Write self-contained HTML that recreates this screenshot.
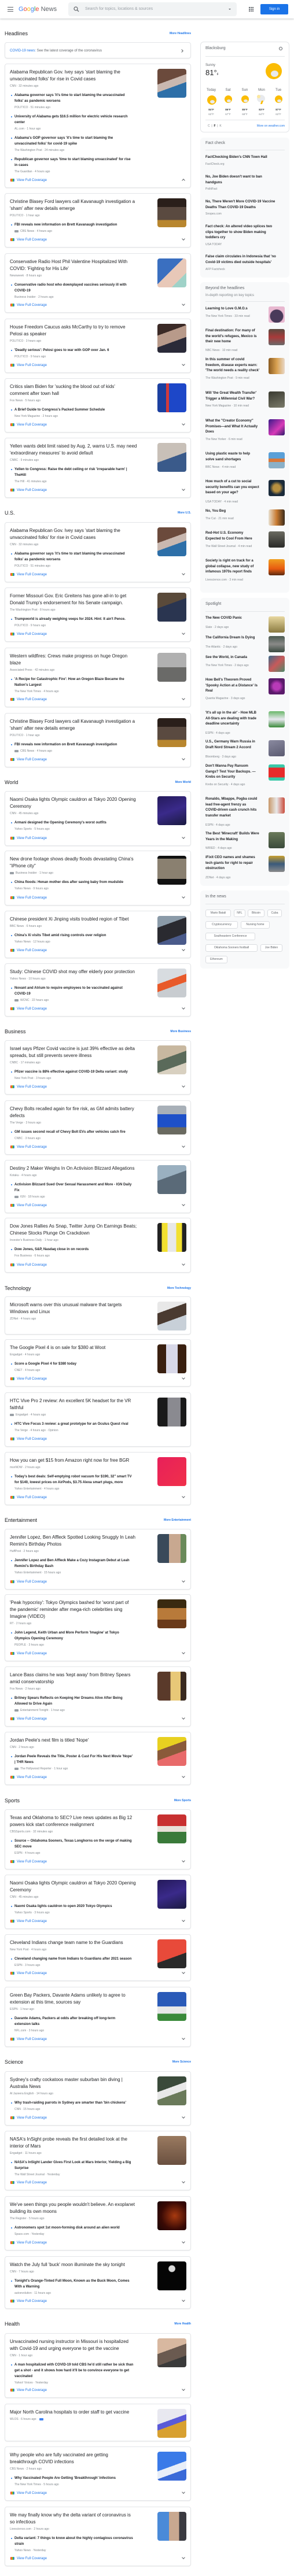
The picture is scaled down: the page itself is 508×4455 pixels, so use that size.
<!DOCTYPE html>
<html><head><meta charset="utf-8"><style>
body{margin:0;width:508px;height:4455px;position:relative;background:#fff;font-family:"Liberation Sans",Arial,sans-serif;overflow:hidden}
.a{position:absolute}
.hdr{position:absolute;left:0;top:0;width:508px;height:32px;background:#fff;box-shadow:0 1px 3px rgba(60,64,67,.3)}
.c{position:absolute;left:8px;width:322px;box-sizing:border-box;border:1px solid #e3e5e8;border-radius:4px;padding:8px 0 0 8px;overflow:hidden;background:#fff;box-shadow:0 1px 1px rgba(60,64,67,.08)}
.h{font-size:8px;line-height:12px;color:#202124;width:258px;white-space:nowrap}
.m{font-size:5px;line-height:12px;color:#80868b}
.s{font-size:6px;line-height:10px;font-weight:bold;color:#202124;margin-top:5px;padding-left:8px;position:relative;white-space:nowrap}
.s:before{content:"";position:absolute;left:2px;top:4px;width:2px;height:2px;border-radius:1px;background:#1a73e8}
.m2{font-size:5px;line-height:10px;color:#80868b;padding-left:8px;margin-top:1px}
.vid{display:inline-block;width:7px;height:4px;background:#9aa0a6;border-radius:1px;margin-right:3px;vertical-align:middle}
.v{position:absolute;left:9px;bottom:7px;font-size:6px;line-height:10px;color:#1a73e8}
.v i{display:inline-block;width:7px;height:5px;margin-right:4px;vertical-align:-1px;background:linear-gradient(90deg,#ea4335 0 25%,#fbbc04 25% 50%,#34a853 50% 75%,#4285f4 75%);border-radius:1px}
.im{position:absolute;left:263px;top:8px;width:50px;height:50px;border-radius:4px}
.ch{position:absolute;right:10px;bottom:12px;width:3px;height:3px;border-right:1px solid #5f6368;border-bottom:1px solid #5f6368;transform:rotate(45deg)}
.up{transform:rotate(-135deg);bottom:10px}
.sec{position:absolute;left:8px;font-size:9px;line-height:12px;color:#202124}
.more{position:absolute;right:178px;font-size:5px;line-height:10px;color:#1a73e8;font-weight:bold}
.r{position:absolute;left:346px;width:154px;box-sizing:border-box;background:#f8f9fa;border-radius:6px}
.rt{position:absolute;left:355px;font-size:7px;line-height:10px;color:#5f6368}
.ri{position:absolute;left:355px;font-size:6px;line-height:9.5px;font-weight:bold;color:#202124;white-space:nowrap}
.rs{position:absolute;left:355px;font-size:5px;line-height:8px;color:#80868b;white-space:nowrap}
.th{position:absolute;left:464px;width:28px;height:28px;border-radius:3px}
.dv{position:absolute;left:355px;width:137px;height:1px;background:#e3e5e8}
.chip{position:absolute;height:13px;box-sizing:border-box;border:1px solid #dadce0;border-radius:3px;background:#fff;font-size:5px;line-height:11px;color:#5f6368;text-align:center}
.sun{position:absolute;border-radius:50%;background:#fbbc04}
.cl{position:absolute;border-radius:50%;background:#e8eaed}
.dy{position:absolute;font-size:6px;line-height:8px;color:#5f6368;text-align:center;width:24px}
.tp{position:absolute;font-size:4.5px;line-height:7px;color:#3c4043;text-align:center;width:24px;font-weight:bold}
.tl{position:absolute;font-size:4.5px;line-height:7px;color:#80868b;text-align:center;width:24px}
</style></head><body>

<div class="hdr">
<div class="a" style="left:13px;top:12px;width:10px;height:1.3px;background:#5f6368"></div>
<div class="a" style="left:13px;top:15.5px;width:10px;height:1.3px;background:#5f6368"></div>
<div class="a" style="left:13px;top:19px;width:10px;height:1.3px;background:#5f6368"></div>
<div class="a" style="left:32px;top:9px;font-size:11px;line-height:14px;white-space:nowrap"><span style="color:#4285f4">G</span><span style="color:#ea4335">o</span><span style="color:#fbbc04">o</span><span style="color:#4285f4">g</span><span style="color:#34a853">l</span><span style="color:#ea4335">e</span> <span style="color:#5f6368">News</span></div>
<div class="a" style="left:118px;top:4px;width:291px;height:24px;background:#f1f3f4;border-radius:4px"></div>
<svg class="a" style="left:127px;top:11px" width="10" height="10" viewBox="0 0 10 10"><circle cx="4" cy="4" r="3" fill="none" stroke="#5f6368" stroke-width="1.2"/><line x1="6.2" y1="6.2" x2="9" y2="9" stroke="#5f6368" stroke-width="1.3"/></svg>
<div class="a" style="left:147px;top:12px;font-size:7px;line-height:8px;color:#9aa0a6">Search for topics, locations &amp; sources</div>
<div class="a" style="left:395px;top:15px;width:0;height:0;border-left:2.5px solid transparent;border-right:2.5px solid transparent;border-top:2.5px solid #5f6368"></div>
<svg class="a" style="left:430px;top:12px" width="8" height="8" viewBox="0 0 8 8" fill="#5f6368"><rect x="0" y="0" width="2" height="2"/><rect x="3" y="0" width="2" height="2"/><rect x="6" y="0" width="2" height="2"/><rect x="0" y="3" width="2" height="2"/><rect x="3" y="3" width="2" height="2"/><rect x="6" y="3" width="2" height="2"/><rect x="0" y="6" width="2" height="2"/><rect x="3" y="6" width="2" height="2"/><rect x="6" y="6" width="2" height="2"/></svg>
<div class="a" style="left:450px;top:7px;width:48px;height:18px;background:#1a73e8;border-radius:2px;color:#fff;font-size:6px;line-height:18px;text-align:center">Sign in</div>
</div>

<!-- Headlines -->
<div class="sec" style="top:52px">Headlines</div><div class="more" style="top:53px">More Headlines</div>
<div class="c" style="top:73px;height:28px;padding-top:0"><div class="a" style="left:8px;top:9px;font-size:6px;line-height:10px;color:#5f6368"><span style="color:#1a73e8">COVID-19 news:</span> See the latest coverage of the coronavirus</div><div class="a" style="right:13px;top:12px;width:3px;height:3px;border-right:1px solid #5f6368;border-bottom:1px solid #5f6368;transform:rotate(-45deg)"></div></div>

<div class="c" style="top:110px;height:215px"><i class="im" style="background:linear-gradient(160deg,#6b4a3c 0 40%,#c9b8b0 40% 60%,#2d6fa8 60%)"></i>
<div class="h">Alabama Republican Gov. Ivey says 'start blaming the<br>unvaccinated folks' for rise in Covid cases</div><div class="m">CNN · 32 minutes ago</div>
<div class="s">Alabama governor says 'it's time to start blaming the unvaccinated<br>folks' as pandemic worsens</div><div class="m2">POLITICO · 51 minutes ago</div>
<div class="s" style="margin-top:6px">University of Alabama gets $16.5 million for electric vehicle research<br>center</div><div class="m2">AL.com · 1 hour ago</div>
<div class="s" style="margin-top:6px">Alabama's GOP governor says 'it's time to start blaming the<br>unvaccinated folks' for covid-19 spike</div><div class="m2">The Washington Post · 24 minutes ago</div>
<div class="s" style="margin-top:6px">Republican governor says 'time to start blaming unvaccinated' for rise<br>in cases</div><div class="m2">The Guardian · 4 hours ago</div>
<div class="v"><i></i>View Full Coverage</div><u class="ch up"></u></div>

<div class="c" style="top:334px;height:94px"><i class="im" style="background:linear-gradient(180deg,#2a1f1a 0 30%,#5a4a40 30% 75%,#b8862e 75%)"></i>
<div class="h">Christine Blasey Ford lawyers call Kavanaugh investigation a<br>'sham' after new details emerge</div><div class="m">POLITICO · 1 hour ago</div>
<div class="s">FBI reveals new information on Brett Kavanaugh investigation</div><div class="m2"><span class="vid"></span>CBS News · 4 hours ago</div>
<div class="v"><i></i>View Full Coverage</div><u class="ch"></u></div>

<div class="c" style="top:438px;height:103px"><i class="im" style="background:linear-gradient(135deg,#3a6fc0 0 45%,#e8c8b8 45% 75%,#9fd2c8 75%)"></i>
<div class="h">Conservative Radio Host Phil Valentine Hospitalized With<br>COVID: 'Fighting for His Life'</div><div class="m">Newsweek · 8 hours ago</div>
<div class="s">Conservative radio host who downplayed vaccines seriously ill with<br>COVID-19</div><div class="m2">Business Insider · 2 hours ago</div>
<div class="v"><i></i>View Full Coverage</div><u class="ch"></u></div>

<div class="c" style="top:551px;height:94px"><i class="im" style="background:linear-gradient(160deg,#3b2a26 0 30%,#b89a8a 30% 60%,#2a2a38 60%)"></i>
<div class="h">House Freedom Caucus asks McCarthy to try to remove<br>Pelosi as speaker</div><div class="m">POLITICO · 3 hours ago</div>
<div class="s">'Deadly serious': Pelosi goes to war with GOP over Jan. 6</div><div class="m2">POLITICO · 9 hours ago</div>
<div class="v"><i></i>View Full Coverage</div><u class="ch"></u></div>

<div class="c" style="top:654px;height:94px"><i class="im" style="background:linear-gradient(90deg,#1b3fa0 0 30%,#d23a3a 30% 40%,#1d47c8 40%)"></i>
<div class="h">Critics slam Biden for 'sucking the blood out of kids'<br>comment after town hall</div><div class="m">Fox News · 5 hours ago</div>
<div class="s">A Brief Guide to Congress's Packed Summer Schedule</div><div class="m2">New York Magazine · 2 hours ago</div>
<div class="v"><i></i>View Full Coverage</div><u class="ch"></u></div>

<div class="c" style="top:757px;height:104px"><i class="im" style="background:linear-gradient(160deg,#c8c0b8 0 50%,#3a5a8a 50%)"></i>
<div class="h">Yellen wants debt limit raised by Aug. 2, warns U.S. may need<br>'extraordinary measures' to avoid default</div><div class="m">CNBC · 9 minutes ago</div>
<div class="s">Yellen to Congress: Raise the debt ceiling or risk 'irreparable harm' |<br>TheHill</div><div class="m2">The Hill · 41 minutes ago</div>
<div class="v"><i></i>View Full Coverage</div><u class="ch"></u></div>

<!-- U.S. -->
<div class="sec" style="top:881px">U.S.</div><div class="more" style="top:882px">More U.S.</div>
<div class="c" style="top:903px;height:104px"><i class="im" style="background:linear-gradient(160deg,#6b4a3c 0 40%,#c9b8b0 40% 60%,#2d6fa8 60%)"></i>
<div class="h">Alabama Republican Gov. Ivey says 'start blaming the<br>unvaccinated folks' for rise in Covid cases</div><div class="m">CNN · 32 minutes ago</div>
<div class="s">Alabama governor says 'it's time to start blaming the unvaccinated<br>folks' as pandemic worsens</div><div class="m2">POLITICO · 51 minutes ago</div>
<div class="v"><i></i>View Full Coverage</div><u class="ch"></u></div>

<div class="c" style="top:1016px;height:94px"><i class="im" style="background:linear-gradient(160deg,#5a4a3a 0 40%,#2a3550 40%)"></i>
<div class="h">Former Missouri Gov. Eric Greitens has gone all-in to get<br>Donald Trump's endorsement for his Senate campaign.</div><div class="m">The Washington Post · 8 hours ago</div>
<div class="s">Trumpworld is already weighing veeps for 2024. Hint: It ain't Pence.</div><div class="m2">POLITICO · 9 hours ago</div>
<div class="v"><i></i>View Full Coverage</div><u class="ch"></u></div>

<div class="c" style="top:1120px;height:103px"><i class="im" style="background:linear-gradient(180deg,#b0b0b0 0 50%,#6a6a68 50%)"></i>
<div class="h">Western wildfires: Crews make progress on huge Oregon<br>blaze</div><div class="m">Associated Press · 42 minutes ago</div>
<div class="s">'A Recipe for Catastrophic Fire': How an Oregon Blaze Became the<br>Nation's Largest</div><div class="m2">The New York Times · 4 hours ago</div>
<div class="v"><i></i>View Full Coverage</div><u class="ch"></u></div>

<div class="c" style="top:1233px;height:94px"><i class="im" style="background:linear-gradient(180deg,#2a1f1a 0 30%,#5a4a40 30% 75%,#b8862e 75%)"></i>
<div class="h">Christine Blasey Ford lawyers call Kavanaugh investigation a<br>'sham' after new details emerge</div><div class="m">POLITICO · 1 hour ago</div>
<div class="s">FBI reveals new information on Brett Kavanaugh investigation</div><div class="m2"><span class="vid"></span>CBS News · 4 hours ago</div>
<div class="v"><i></i>View Full Coverage</div><u class="ch"></u></div>

<!-- World -->
<div class="sec" style="top:1347px">World</div><div class="more" style="top:1348px">More World</div>
<div class="c" style="top:1368px;height:95px"><i class="im" style="background:linear-gradient(160deg,#241a5a,#3a2a8a 50%,#1a1a40)"></i>
<div class="h">Naomi Osaka lights Olympic cauldron at Tokyo 2020 Opening<br>Ceremony</div><div class="m">CNN · 45 minutes ago</div>
<div class="s">Armani designed the Opening Ceremony's worst outfits</div><div class="m2">Yahoo Sports · 5 hours ago</div>
<div class="v"><i></i>View Full Coverage</div><u class="ch"></u></div>

<div class="c" style="top:1471px;height:95px"><i class="im" style="background:linear-gradient(180deg,#111 0 10%,#8a8070 10% 80%,#111 80%)"></i>
<div class="h">New drone footage shows deadly floods devastating China's<br>"iPhone city"</div><div class="m"><span class="vid"></span>Business Insider · 1 hour ago</div>
<div class="s">China floods: Henan mother dies after saving baby from mudslide</div><div class="m2">Yahoo News · 9 hours ago</div>
<div class="v"><i></i>View Full Coverage</div><u class="ch"></u></div>

<div class="c" style="top:1575px;height:82px"><i class="im" style="background:linear-gradient(160deg,#8a9aa8 0 30%,#2a2a30 30% 70%,#4a5a8a 70%)"></i>
<div class="h">Chinese president Xi Jinping visits troubled region of Tibet</div><div class="m">BBC News · 6 hours ago</div>
<div class="s">China's Xi visits Tibet amid rising controls over religion</div><div class="m2">Yahoo News · 12 hours ago</div>
<div class="v"><i></i>View Full Coverage</div><u class="ch"></u></div>

<div class="c" style="top:1666px;height:92px"><i class="im" style="background:linear-gradient(160deg,#d8dce0 0 40%,#e85a2a 40% 60%,#c8ccd0 60%)"></i>
<div class="h">Study: Chinese COVID shot may offer elderly poor protection</div><div class="m">Yahoo News · 10 hours ago</div>
<div class="s">Novant and Atrium to require employees to be vaccinated against<br>COVID-19</div><div class="m2"><span class="vid"></span>WCNC · 22 hours ago</div>
<div class="v"><i></i>View Full Coverage</div><u class="ch"></u></div>

<!-- Business -->
<div class="sec" style="top:1778px">Business</div><div class="more" style="top:1779px">More Business</div>
<div class="c" style="top:1799px;height:94px"><i class="im" style="background:linear-gradient(160deg,#c8b8a0 0 40%,#5a6a5a 40% 70%,#d8d0c0 70%)"></i>
<div class="h">Israel says Pfizer Covid vaccine is just 39% effective as delta<br>spreads, but still prevents severe illness</div><div class="m">CNBC · 17 minutes ago</div>
<div class="s">Pfizer vaccine is 88% effective against COVID-19 Delta variant: study</div><div class="m2">New York Post · 3 hours ago</div>
<div class="v"><i></i>View Full Coverage</div><u class="ch"></u></div>

<div class="c" style="top:1903px;height:94px"><i class="im" style="background:linear-gradient(180deg,#a8b0b8 0 30%,#1e50c8 30% 75%,#6a6a60 75%)"></i>
<div class="h">Chevy Bolts recalled again for fire risk, as GM admits battery<br>defects</div><div class="m">The Verge · 3 hours ago</div>
<div class="s">GM issues second recall of Chevy Bolt EVs after vehicles catch fire</div><div class="m2">CNBC · 3 hours ago</div>
<div class="v"><i></i>View Full Coverage</div><u class="ch"></u></div>

<div class="c" style="top:2006px;height:92px"><i class="im" style="background:linear-gradient(160deg,#9ab0c0 0 40%,#5a6a78 40%)"></i>
<div class="h">Destiny 2 Maker Weighs In On Activision Blizzard Allegations</div><div class="m">Kotaku · 4 hours ago</div>
<div class="s">Activision Blizzard Sued Over Sexual Harassment and More - IGN Daily<br>Fix</div><div class="m2"><span class="vid"></span>IGN · 18 hours ago</div>
<div class="v"><i></i>View Full Coverage</div><u class="ch"></u></div>

<div class="c" style="top:2106px;height:95px"><i class="im" style="background:linear-gradient(90deg,#222 0 15%,#f2e030 15% 35%,#e8e8e8 35% 65%,#f2e030 65% 85%,#222 85%)"></i>
<div class="h">Dow Jones Rallies As Snap, Twitter Jump On Earnings Beats;<br>Chinese Stocks Plunge On Crackdown</div><div class="m">Investor's Business Daily · 1 hour ago</div>
<div class="s">Dow Jones, S&amp;P, Nasdaq close in on records</div><div class="m2">Fox Business · 6 hours ago</div>
<div class="v"><i></i>View Full Coverage</div><u class="ch"></u></div>

<!-- Technology -->
<div class="sec" style="top:2222px">Technology</div><div class="more" style="top:2223px">More Technology</div>
<div class="c" style="top:2242px;height:66px"><i class="im" style="background:linear-gradient(160deg,#e8e8e8 0 30%,#4a3a30 30% 60%,#c8d0d8 60%)"></i>
<div class="h">Microsoft warns over this unusual malware that targets<br>Windows and Linux</div><div class="m">ZDNet · 4 hours ago</div></div>

<div class="c" style="top:2316px;height:82px"><i class="im" style="background:linear-gradient(90deg,#3a2010 0 30%,#d8d8e8 30% 70%,#3a2010 70%)"></i>
<div class="h">The Google Pixel 4 is on sale for $380 at Woot</div><div class="m">Engadget · 4 hours ago</div>
<div class="s">Score a Google Pixel 4 for $380 today</div><div class="m2">CNET · 4 hours ago</div>
<div class="v"><i></i>View Full Coverage</div><u class="ch"></u></div>

<div class="c" style="top:2408px;height:94px"><i class="im" style="background:linear-gradient(90deg,#1a1a1a 0 35%,#8a8a90 35% 80%,#1a1a1a 80%)"></i>
<div class="h">HTC Vive Pro 2 review: An excellent 5K headset for the VR<br>faithful</div><div class="m"><span class="vid"></span>Engadget · 4 hours ago</div>
<div class="s">HTC Vive Focus 3 review: a great prototype for an Oculus Quest rival</div><div class="m2">The Verge · 4 hours ago · Opinion</div>
<div class="v"><i></i>View Full Coverage</div></div>

<div class="c" style="top:2511px;height:92px"><i class="im" style="background:linear-gradient(135deg,#e8205a,#f0304a)"></i>
<div class="h">How you can get $15 from Amazon right now for free BGR</div><div class="m">msnNOW · 2 hours ago</div>
<div class="s">Today's best deals: Self-emptying robot vacuum for $190, 32" smart TV<br>for $140, lowest prices on AirPods, $3.75 Alexa smart plugs, more</div><div class="m2">Yahoo Entertainment · 4 hours ago</div>
<div class="v"><i></i>View Full Coverage</div><u class="ch"></u></div>

<!-- Entertainment -->
<div class="sec" style="top:2623px">Entertainment</div><div class="more" style="top:2624px">More Entertainment</div>
<div class="c" style="top:2644px;height:105px"><i class="im" style="background:linear-gradient(90deg,#3a4a5a 0 40%,#c8a890 40% 80%,#6a8a5a 80%)"></i>
<div class="h">Jennifer Lopez, Ben Affleck Spotted Looking Snuggly In Leah<br>Remini's Birthday Photos</div><div class="m">HuffPost · 2 hours ago</div>
<div class="s">Jennifer Lopez and Ben Affleck Make a Cozy Instagram Debut at Leah<br>Remini's Birthday Bash</div><div class="m2">Yahoo Entertainment · 15 hours ago</div>
<div class="v"><i></i>View Full Coverage</div><u class="ch"></u></div>

<div class="c" style="top:2757px;height:116px"><i class="im" style="background:linear-gradient(180deg,#3a2a10 0 30%,#b87a3a 30% 70%,#6a3a1a 70%)"></i>
<div class="h">'Peak hypocrisy': Tokyo Olympics bashed for 'worst part of<br>the pandemic' reminder after mega-rich celebrities sing<br>Imagine (VIDEO)</div><div class="m">RT · 2 hours ago</div>
<div class="s">John Legend, Keith Urban and More Perform 'Imagine' at Tokyo<br>Olympics Opening Ceremony</div><div class="m2">PEOPLE · 3 hours ago</div>
<div class="v"><i></i>View Full Coverage</div><u class="ch"></u></div>

<div class="c" style="top:2882px;height:104px"><i class="im" style="background:linear-gradient(90deg,#5a3a2a 0 45%,#e8c878 45% 80%,#3a2a20 80%)"></i>
<div class="h">Lance Bass claims he was 'kept away' from Britney Spears<br>amid conservatorship</div><div class="m">Fox News · 2 hours ago</div>
<div class="s">Britney Spears Reflects on Keeping Her Dreams Alive After Being<br>Allowed to Drive Again</div><div class="m2"><span class="vid"></span>Entertainment Tonight · 1 hour ago</div>
<div class="v"><i></i>View Full Coverage</div><u class="ch"></u></div>

<div class="c" style="top:2995px;height:92px"><i class="im" style="background:linear-gradient(160deg,#e8d020 0 35%,#8a5a3a 35% 60%,#e86a6a 60%)"></i>
<div class="h">Jordan Peele's next film is titled 'Nope'</div><div class="m">CNN · 2 hours ago</div>
<div class="s">Jordan Peele Reveals the Title, Poster &amp; Cast For His Next Movie 'Nope'<br>| THR News</div><div class="m2"><span class="vid"></span>The Hollywood Reporter · 1 hour ago</div>
<div class="v"><i></i>View Full Coverage</div><u class="ch"></u></div>

<!-- Sports -->
<div class="sec" style="top:3108px">Sports</div><div class="more" style="top:3109px">More Sports</div>
<div class="c" style="top:3129px;height:104px"><i class="im" style="background:linear-gradient(180deg,#c83030 0 40%,#e8e0d8 40% 60%,#3a7a3a 60%)"></i>
<div class="h">Texas and Oklahoma to SEC? Live news updates as Big 12<br>powers kick start conference realignment</div><div class="m">CBSSports.com · 32 minutes ago</div>
<div class="s">Source -- Oklahoma Sooners, Texas Longhorns on the verge of making<br>SEC move</div><div class="m2">ESPN · 4 hours ago</div>
<div class="v"><i></i>View Full Coverage</div><u class="ch"></u></div>

<div class="c" style="top:3242px;height:94px"><i class="im" style="background:linear-gradient(160deg,#241a5a,#3a2a8a 50%,#1a1a40)"></i>
<div class="h">Naomi Osaka lights Olympic cauldron at Tokyo 2020 Opening<br>Ceremony</div><div class="m">CNN · 45 minutes ago</div>
<div class="s">Naomi Osaka lights cauldron to open 2020 Tokyo Olympics</div><div class="m2">Yahoo Sports · 3 hours ago</div>
<div class="v"><i></i>View Full Coverage</div><u class="ch"></u></div>

<div class="c" style="top:3345px;height:81px"><i class="im" style="background:linear-gradient(160deg,#e84a3a 0 60%,#2a2a2a 60%)"></i>
<div class="h">Cleveland Indians change team name to the Guardians</div><div class="m">New York Post · 4 hours ago</div>
<div class="s">Cleveland changing name from Indians to Guardians after 2021 season</div><div class="m2">ESPN · 3 hours ago</div>
<div class="v"><i></i>View Full Coverage</div><u class="ch"></u></div>

<div class="c" style="top:3436px;height:104px"><i class="im" style="background:linear-gradient(180deg,#2a5ab8 0 50%,#e8e8e8 50% 75%,#3a8a3a 75%)"></i>
<div class="h">Green Bay Packers, Davante Adams unlikely to agree to<br>extension at this time, sources say</div><div class="m">ESPN · 1 hour ago</div>
<div class="s">Davante Adams, Packers at odds after breaking off long-term<br>extension talks</div><div class="m2">NFL.com · 3 hours ago</div>
<div class="v"><i></i>View Full Coverage</div><u class="ch"></u></div>

<!-- Science -->
<div class="sec" style="top:3560px">Science</div><div class="more" style="top:3561px">More Science</div>
<div class="c" style="top:3582px;height:94px"><i class="im" style="background:linear-gradient(160deg,#3a4a3a 0 40%,#e8e8e8 40% 60%,#6a7a5a 60%)"></i>
<div class="h">Sydney's crafty cockatoos master suburban bin diving |<br>Australia News</div><div class="m">Al Jazeera English · 14 hours ago</div>
<div class="s">Why trash-raiding parrots in Sydney are smarter than 'bin chickens'</div><div class="m2">CNN · 15 hours ago</div>
<div class="v"><i></i>View Full Coverage</div><u class="ch"></u></div>

<div class="c" style="top:3685px;height:103px"><i class="im" style="background:linear-gradient(180deg,#9a7a60,#6a5040)"></i>
<div class="h">NASA's InSight probe reveals the first detailed look at the<br>interior of Mars</div><div class="m">Engadget · 11 hours ago</div>
<div class="s">NASA's InSight Lander Gives First Look at Mars Interior, Yielding a Big<br>Surprise</div><div class="m2">The Wall Street Journal · Yesterday</div>
<div class="v"><i></i>View Full Coverage</div><u class="ch"></u></div>

<div class="c" style="top:3798px;height:94px"><i class="im" style="background:radial-gradient(circle at 60% 50%,#a83a10,#3a0a05 60%,#1a0505)"></i>
<div class="h">We've seen things you people wouldn't believe. An exoplanet<br>building its own moons</div><div class="m">The Register · 5 hours ago</div>
<div class="s">Astronomers spot 1st moon-forming disk around an alien world</div><div class="m2">Space.com · Yesterday</div>
<div class="v"><i></i>View Full Coverage</div><u class="ch"></u></div>

<div class="c" style="top:3902px;height:91px"><i class="im" style="background:radial-gradient(circle at 50% 25%,#d8d8d8 0 12%,#050505 14%)"></i>
<div class="h">Watch the July full 'buck' moon illuminate the sky tonight</div><div class="m">CNN · 7 hours ago</div>
<div class="s">Tonight's Orange-Tinted Full Moon, Known as the Buck Moon, Comes<br>With a Warning</div><div class="m2">autoevolution · 11 hours ago</div>
<div class="v"><i></i>View Full Coverage</div><u class="ch"></u></div>

<!-- Health -->
<div class="sec" style="top:4013px">Health</div><div class="more" style="top:4014px">More Health</div>
<div class="c" style="top:4035px;height:112px"><i class="im" style="background:linear-gradient(160deg,#d8b8a0 0 40%,#6a5a50 40% 70%,#3a3a3a 70%)"></i>
<div class="h">Unvaccinated nursing instructor in Missouri is hospitalized<br>with Covid-19 and urging everyone to get the vaccine</div><div class="m">CNN · 1 hour ago</div>
<div class="s">A man hospitalized with COVID-19 told CBS he'd still rather be sick than<br>get a shot - and it shows how hard it'll be to convince everyone to get<br>vaccinated</div><div class="m2">Yahoo! Voices · Yesterday</div>
<div class="v"><i></i>View Full Coverage</div><u class="ch"></u></div>

<div class="c" style="top:4157px;height:65px"><i class="im" style="background:linear-gradient(160deg,#e8e8f0 0 40%,#5a5ad8 40% 55%,#d8a030 55%)"></i>
<div class="h">Major North Carolina hospitals to order staff to get vaccine</div><div class="m">WLOS · 6 hours ago <span style="display:inline-block;width:7px;height:4px;margin-left:4px;background:#4285f4;border-radius:1px;vertical-align:middle"></span></div></div>

<div class="c" style="top:4231px;height:94px"><i class="im" style="background:linear-gradient(160deg,#3a7ae8 0 50%,#e8eef8 50% 70%,#3a6ad8 70%)"></i>
<div class="h">Why people who are fully vaccinated are getting<br>breakthrough COVID infections</div><div class="m">CBS News · 2 hours ago</div>
<div class="s">Why Vaccinated People Are Getting 'Breakthrough' Infections</div><div class="m2">The New York Times · 5 hours ago</div>
<div class="v"><i></i>View Full Coverage</div><u class="ch"></u></div>

<div class="c" style="top:4335px;height:103px"><i class="im" style="background:linear-gradient(90deg,#4a8ad8 0 40%,#c8a890 40% 75%,#3a3a40 75%)"></i>
<div class="h">We may finally know why the delta variant of coronavirus is<br>so infectious</div><div class="m">Livescience.com · 2 hours ago</div>
<div class="s">Delta variant: 7 things to know about the highly contagious coronavirus<br>strain</div><div class="m2">Yahoo News · Yesterday</div>
<div class="v"><i></i>View Full Coverage</div><u class="ch"></u></div>

<!-- RIGHT: weather -->
<div class="r" style="top:72px;height:157px;background:#fff;border:1px solid #e3e5e8"></div>
<div class="rt" style="top:79px">Blacksburg</div>
<div class="a" style="left:482px;top:81px;width:4px;height:4px;border:1px solid #5f6368;border-radius:50%"></div>
<div class="dv" style="top:97px"></div>
<div class="a" style="left:355px;top:109px;font-size:6px;line-height:8px;color:#5f6368">Sunny</div>
<div class="a" style="left:355px;top:118px;font-size:13px;line-height:16px;color:#202124">81°<span style="font-size:5px">F</span></div>
<div class="sun" style="left:459px;top:109px;width:28px;height:28px"></div><div class="cl" style="left:468px;top:122px;width:13px;height:11px"></div>
<div class="dy" style="left:353px;top:152px">Today</div><div class="dy" style="left:382px;top:152px">Sat</div><div class="dy" style="left:411px;top:152px">Sun</div><div class="dy" style="left:440px;top:152px">Mon</div><div class="dy" style="left:469px;top:152px">Tue</div>
<div class="sun" style="left:358px;top:165px;width:16px;height:16px"></div><div class="cl" style="left:363px;top:173px;width:8px;height:6px"></div>
<div class="sun" style="left:388px;top:165px;width:13px;height:13px"></div><div class="cl" style="left:392px;top:172px;width:7px;height:5px"></div>
<div class="sun" style="left:417px;top:165px;width:13px;height:13px"></div><div class="cl" style="left:421px;top:172px;width:7px;height:5px"></div>
<div class="cl" style="left:444px;top:164px;width:14px;height:13px"></div><div class="sun" style="left:444px;top:164px;width:6px;height:6px;background:#fce8a0"></div><div class="a" style="left:451px;top:174px;width:3px;height:6px;background:#fbbc04;transform:skewX(-20deg)"></div>
<div class="sun" style="left:475px;top:165px;width:13px;height:13px"></div><div class="cl" style="left:479px;top:172px;width:7px;height:5px"></div>
<div class="tp" style="left:353px;top:186px">84°F</div><div class="tp" style="left:382px;top:186px">86°F</div><div class="tp" style="left:411px;top:186px">85°F</div><div class="tp" style="left:440px;top:186px">83°F</div><div class="tp" style="left:469px;top:186px">87°F</div>
<div class="tl" style="left:353px;top:194px">63°F</div><div class="tl" style="left:382px;top:194px">67°F</div><div class="tl" style="left:411px;top:194px">68°F</div><div class="tl" style="left:440px;top:194px">64°F</div><div class="tl" style="left:469px;top:194px">63°F</div>
<div class="dv" style="top:207px"></div>
<div class="a" style="left:359px;top:214px;font-size:5px;line-height:8px;color:#80868b">C &nbsp;| &nbsp;<b style="color:#202124">F</b> &nbsp;| &nbsp;K</div>
<div class="a" style="right:16px;top:214px;font-size:5px;line-height:8px;color:#1a73e8">More on weather.com</div>

<!-- Fact check -->
<div class="r" style="top:238px;height:242px"></div>
<div class="rt" style="top:243px">Fact check</div>
<div class="dv" style="top:259px"></div>
<div class="ri" style="top:268px">FactChecking Biden's CNN Town Hall</div><div class="rs" style="top:280px">FactCheck.org</div>
<div class="ri" style="top:302px">No, Joe Biden doesn't want to ban<br>handguns</div><div class="rs" style="top:323px">PolitiFact</div>
<div class="ri" style="top:345px">No, There Weren't More COVID-19 Vaccine<br>Deaths Than COVID-19 Deaths</div><div class="rs" style="top:366px">Snopes.com</div>
<div class="ri" style="top:388px">Fact check: An altered video splices two<br>clips together to show Biden making<br>toddlers cry</div><div class="rs" style="top:419px">USA TODAY</div>
<div class="ri" style="top:440px">False claim circulates in Indonesia that 'no<br>Covid-19 victims died outside hospitals'</div><div class="rs" style="top:462px">AFP Factcheck</div>

<!-- Beyond the headlines -->
<div class="r" style="top:488px;height:537px"></div>
<div class="rt" style="top:494px">Beyond the headlines</div>
<div class="a" style="left:355px;top:507px;font-size:6px;line-height:8px;color:#80868b">In-depth reporting on key topics</div>
<div class="dv" style="top:521px"></div>
<div class="ri" style="top:530px">Learning to Love G.M.O.s</div><div class="rs" style="top:543px">The New York Times · 33 min read</div><i class="th" style="top:530px;background:radial-gradient(circle at 50% 60%,#4a3a5a 0 50%,#e8b8d0 55%)"></i>
<div class="ri" style="top:568px">Final destination: For many of<br>the world's refugees, Mexico is<br>their new home</div><div class="rs" style="top:602px">NBC News · 10 min read</div><i class="th" style="top:569px;background:linear-gradient(180deg,#5a4a40,#a83a3a 50%,#6a6a6a)"></i>
<div class="ri" style="top:618px">In this summer of covid<br>freedom, disease experts warn:<br>'The world needs a reality check'</div><div class="rs" style="top:650px">The Washington Post · 9 min read</div><i class="th" style="top:619px;background:linear-gradient(90deg,#8a5a20,#d8a050 50%,#e8d8c8)"></i>
<div class="ri" style="top:676px">Will 'the Great Wealth Transfer'<br>Trigger a Millennial Civil War?</div><div class="rs" style="top:698px">New York Magazine · 10 min read</div><i class="th" style="top:677px;background:linear-gradient(160deg,#3a3a30,#7a7a6a)"></i>
<div class="ri" style="top:724px">What the "Creator Economy"<br>Promises—and What It Actually<br>Does</div><div class="rs" style="top:756px">The New Yorker · 6 min read</div><i class="th" style="top:725px;background:linear-gradient(135deg,#3a1a8a,#d83ab8 60%,#2a1a6a)"></i>
<div class="ri" style="top:781px">Using plastic waste to help<br>solve sand shortages</div><div class="rs" style="top:804px">BBC News · 4 min read</div><i class="th" style="top:782px;background:linear-gradient(180deg,#5aa0d8 0 40%,#d8783a 40% 60%,#8ab0c8 60%)"></i>
<div class="ri" style="top:829px">How much of a cut to social<br>security benefits can you expect<br>based on your age?</div><div class="rs" style="top:864px">USA TODAY · 4 min read</div><i class="th" style="top:830px;background:radial-gradient(circle,#b89040 0 30%,#1a2a3a 60%)"></i>
<div class="ri" style="top:880px">No, You Beg</div><div class="rs" style="top:893px">The Cut · 21 min read</div><i class="th" style="top:881px;background:linear-gradient(90deg,#e8e0d0,#c87a30 50%,#3a2a1a)"></i>
<div class="ri" style="top:918px">Red-Hot U.S. Economy<br>Expected to Cool From Here</div><div class="rs" style="top:941px">The Wall Street Journal · 4 min read</div><i class="th" style="top:919px;background:linear-gradient(180deg,#6a6a60,#2a2a28)"></i>
<div class="ri" style="top:966px">Society is right on track for a<br>global collapse, new study of<br>infamous 1970s report finds</div><div class="rs" style="top:999px">Livescience.com · 3 min read</div><i class="th" style="top:967px;background:linear-gradient(180deg,#f0a020,#e85a10 60%,#5a2a10)"></i>

<!-- Spotlight -->
<div class="r" style="top:1034px;height:498px"></div>
<div class="rt" style="top:1040px">Spotlight</div>
<div class="dv" style="top:1057px"></div>
<div class="ri" style="top:1065px">The New COVID Panic</div><div class="rs" style="top:1081px">Slate · 2 days ago</div><i class="th" style="top:1066px;background:linear-gradient(180deg,#e8d8a0,#8a7a40)"></i>
<div class="ri" style="top:1099px">The California Dream Is Dying</div><div class="rs" style="top:1115px">The Atlantic · 2 days ago</div><i class="th" style="top:1100px;background:linear-gradient(180deg,#4a5a50,#8a8a88 50%,#3a4a40)"></i>
<div class="ri" style="top:1133px">See the World, in Canada</div><div class="rs" style="top:1147px">The New York Times · 2 days ago</div><i class="th" style="top:1134px;background:linear-gradient(135deg,#3a6a8a,#c85a5a 50%,#4a8a6a)"></i>
<div class="ri" style="top:1172px">How Bell's Theorem Proved<br>'Spooky Action at a Distance' Is<br>Real</div><div class="rs" style="top:1204px">Quanta Magazine · 3 days ago</div><i class="th" style="top:1173px;background:radial-gradient(circle,#b83ab8 0 30%,#5a1a6a 60%)"></i>
<div class="ri" style="top:1229px">'It's all up in the air' - How MLB<br>All-Stars are dealing with trade<br>deadline uncertainty</div><div class="rs" style="top:1264px">ESPN · 4 days ago</div><i class="th" style="top:1230px;background:linear-gradient(180deg,#6ab86a,#e8e8f0 50%,#3a8a3a)"></i>
<div class="ri" style="top:1279px">U.S., Germany Warn Russia in<br>Draft Nord Stream 2 Accord</div><div class="rs" style="top:1305px">Bloomberg · 3 days ago</div><i class="th" style="top:1280px;background:linear-gradient(160deg,#8a8aa0,#5a5a70)"></i>
<div class="ri" style="top:1321px">Don't Wanna Pay Ransom<br>Gangs? Test Your Backups. —<br>Krebs on Security</div><div class="rs" style="top:1353px">Krebs on Security · 4 days ago</div><i class="th" style="top:1322px;background:linear-gradient(180deg,#3ac8a8 0 20%,#e82a2a 20% 80%,#3ac8a8 80%)"></i>
<div class="ri" style="top:1378px">Ronaldo, Mbappe, Pogba could<br>lead free-agent frenzy as<br>COVID-driven cash crunch hits<br>transfer market</div><div class="rs" style="top:1423px">ESPN · 4 days ago</div><i class="th" style="top:1379px;background:linear-gradient(90deg,#c8986a,#e8e8e8 50%,#c84a3a)"></i>
<div class="ri" style="top:1438px">The Best 'Minecraft' Builds Were<br>Years in the Making</div><div class="rs" style="top:1463px">WIRED · 4 days ago</div><i class="th" style="top:1439px;background:linear-gradient(180deg,#6a7a5a,#3a4a3a)"></i>
<div class="ri" style="top:1479px">iFixit CEO names and shames<br>tech giants for right to repair<br>obstruction</div><div class="rs" style="top:1514px">ZDNet · 4 days ago</div><i class="th" style="top:1480px;background:linear-gradient(180deg,#c8a030,#3a5a7a 50%,#8a8a8a)"></i>

<!-- In the news -->
<div class="r" style="top:1540px;height:135px"></div>
<div class="rt" style="top:1546px">In the news</div>
<div class="dv" style="top:1563px"></div>
<div class="chip" style="left:355px;top:1573px;width:44px">Mario Batali</div>
<div class="chip" style="left:404px;top:1573px;width:20px">NFL</div>
<div class="chip" style="left:428px;top:1573px;width:29px">Bitcoin</div>
<div class="chip" style="left:462px;top:1573px;width:25px">Cuba</div>
<div class="chip" style="left:355px;top:1593px;width:56px">Cryptocurrency</div>
<div class="chip" style="left:416px;top:1593px;width:50px">Nursing home</div>
<div class="chip" style="left:355px;top:1613px;width:86px">Southeastern Conference</div>
<div class="chip" style="left:355px;top:1633px;width:90px">Oklahoma Sooners football</div>
<div class="chip" style="left:450px;top:1633px;width:38px">Joe Biden</div>
<div class="chip" style="left:355px;top:1653px;width:38px">Ethereum</div>

</body></html>
